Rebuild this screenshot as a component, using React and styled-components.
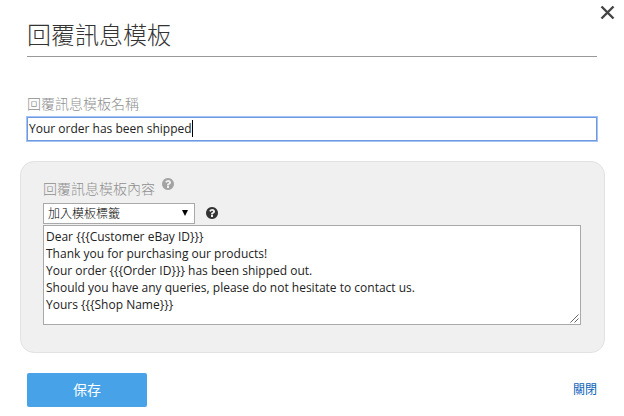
import React from "react";
import styled, { createGlobalStyle, css } from "styled-components";

const GlobalStyle = createGlobalStyle`
  * { box-sizing: border-box; }
  body {
    margin: 0;
    background: #fff;
    font-family: "Open Sans", "Noto Sans CJK TC", sans-serif;
    font-size: 12px;
    color: #222;
  }
`;

const Dialog = styled.main`
  position: relative;
  width: 624px;
  height: 416px;
  padding: 0 19px 0 20px;
  display: flex;
  flex-direction: column;
  background: #fff;
  overflow: hidden;
`;

const CloseButton = styled.button`
  position: absolute;
  top: 5px;
  right: 9px;
  width: 15px;
  height: 15px;
  padding: 0;
  border: 0;
  background: none;
  color: #444;
  svg { display: block; }
`;

const Title = styled.h1`
  height: 57px;
  margin: 0 8px 0 7px;
  padding-top: 16px;
  border-bottom: 1px solid #999;
  font-size: 24px;
  line-height: 38px;
  font-weight: 300;
  color: #333;
`;

const Label = styled.label`
  font-size: 14px;
  line-height: 20px;
  font-weight: 300;
  color: #8f8f8f;
`;

const NameField = styled.div`
  display: flex;
  flex-direction: column;
  margin: 37px 7px 0;
`;

const NameInput = styled.div`
  display: flex;
  align-items: center;
  height: 24px;
  margin: 3px 1px 0 0;
  padding: 0 1px 1px;
  border: 1px solid #6f98de;
  box-shadow: 0 0 0 1px #a4c4f6;
  background: #fff;
  line-height: 17px;
`;

const Caret = styled.span`
  width: 1px;
  height: 17px;
  background: #000;
`;

const Panel = styled.section`
  height: 192px;
  margin-top: 20px;
  padding: 17px 23px 0 22px;
  border: 1px solid #e2e2e2;
  border-radius: 14px;
  background: #f0f0f0;
`;

const LabelRow = styled.div`
  display: flex;
  height: 24px;
  gap: 7px;
`;

const HelpIcon = styled.svg`
  display: block;
  width: 12px;
  height: 12px;
  margin-top: -1px;
  fill: ${(p) => (p.$dark ? "#333" : "#a3a3a3")};
`;

const TagRow = styled.div`
  display: flex;
  align-items: center;
  gap: 11px;
  height: 21px;
`;

const Select = styled.div`
  display: flex;
  align-items: center;
  justify-content: space-between;
  width: 152px;
  height: 21px;
  padding: 0 6px 0 4px;
  border: 1px solid #a9a9a9;
  background: #fff;
  color: #000;
  font-weight: 300;
  line-height: 19px;
`;

const Arrow = styled.svg`
  display: block;
  width: 6px;
  height: 6px;
  margin-bottom: 2px;
`;

const Message = styled.div`
  position: relative;
  height: 100px;
  margin-top: 1px;
  padding: 2px;
  border: 1px solid #a9a9a9;
  background: #fff;
  line-height: 17px;
  white-space: pre;
`;

const ResizeGrip = styled.svg`
  position: absolute;
  right: 1px;
  bottom: 1px;
  width: 9px;
  height: 9px;
  stroke: #666;
  fill: none;
`;

const Footer = styled.footer`
  display: flex;
  align-items: center;
  justify-content: space-between;
  height: 34px;
  margin: 20px 8px 0 7px;
`;

const SaveButton = styled.button`
  width: 120px;
  height: 34px;
  padding: 0;
  border: 0;
  border-radius: 2px;
  background: #47a2e7;
  color: #fff;
  font: 14px/34px "Open Sans", "Noto Sans CJK TC", sans-serif;
`;

const CloseLink = styled.a`
  color: #0a62b8;
  line-height: 18px;
`;

const lines = [
  "Dear {{{Customer eBay ID}}}",
  "Thank you for purchasing our products!",
  "Your order {{{Order ID}}} has been shipped out.",
  "Should you have any queries, please do not hesitate to contact us.",
  "Yours {{{Shop Name}}}",
];

function Help({ dark }) {
  return (
    <HelpIcon $dark={dark} viewBox="0 -1408 1536 1536">
      <path
        transform="scale(1 -1)"
        d="M896 160v192q0 14 -9 23t-23 9h-192q-14 0 -23 -9t-9 -23v-192q0 -14 9 -23t23 -9h192q14 0 23 9t9 23zM1152 832q0 88 -55.5 163t-138.5 116t-170 41q-243 0 -371 -213q-15 -24 8 -42l132 -100q7 -6 19 -6q16 0 25 12q53 68 86 92q34 24 86 24q48 0 85.5 -26t37.5 -59q0 -38 -20 -61t-68 -45q-63 -28 -115.5 -86.5t-52.5 -125.5v-36q0 -14 9 -23t23 -9h192q14 0 23 9t9 23q0 19 21.5 49.5t54.5 49.5q32 18 49 28.5t46 35t44.5 48t28 60.5t12.5 81zM1536 640q0 -209 -103 -385.5t-279.5 -279.5t-385.5 -103t-385.5 103t-279.5 279.5t-103 385.5t103 385.5t279.5 279.5t385.5 103t385.5 -103t279.5 -279.5t103 -385.5z"
      />
    </HelpIcon>
  );
}

export default function App() {
  return (
    <>
      <GlobalStyle />
      <Dialog>
        <CloseButton aria-label="關閉">
          <svg width="15" height="15" viewBox="0 0 15 15">
            <path d="M1.5 1.5L13.5 13.5M13.5 1.5L1.5 13.5" stroke="currentColor" strokeWidth="2.4" />
          </svg>
        </CloseButton>
        <Title>回覆訊息模板</Title>
        <NameField>
          <Label>回覆訊息模板名稱</Label>
          <NameInput>
            Your order has been shipped
            <Caret />
          </NameInput>
        </NameField>
        <Panel>
          <LabelRow>
            <Label>回覆訊息模板內容</Label>
            <Help />
          </LabelRow>
          <TagRow>
            <Select>
              加入模板標籤
              <Arrow viewBox="0 0 6 6">
                <path d="M0 0H6L3 6Z" />
              </Arrow>
            </Select>
            <Help dark />
          </TagRow>
          <Message>
            {lines.join("\n")}
            <ResizeGrip viewBox="0 0 9 9">
              <path d="M0.5 8.5L8.5 0.5M4.5 8.5L8.5 4.5" />
            </ResizeGrip>
          </Message>
        </Panel>
        <Footer>
          <SaveButton>保存</SaveButton>
          <CloseLink>關閉</CloseLink>
        </Footer>
      </Dialog>
    </>
  );
}
